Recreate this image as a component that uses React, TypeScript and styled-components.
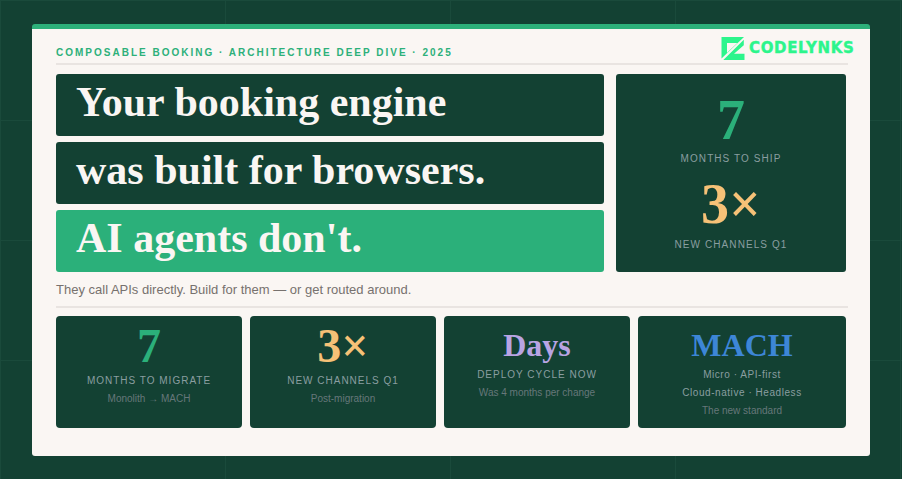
import React from "react";
import styled, { createGlobalStyle } from "styled-components";

const Global = createGlobalStyle`
  html, body { margin: 0; padding: 0; width: 902px; height: 479px; overflow: hidden; }
  body { font-family: "Liberation Sans", Arial, sans-serif; }
`;

const Page = styled.div`
  width: 902px;
  height: 479px;
  box-sizing: border-box;
  padding: 24px 32px 23px;
  background-color: #134133;
  background-image:
    linear-gradient(to right, #1a4a3b 1px, transparent 1px),
    linear-gradient(to bottom, #1a4a3b 1px, transparent 1px);
  background-size: 225px 120px;
  background-position: 0 0;
`;

const Sheet = styled.main`
  position: relative;
  height: 432px;
  box-sizing: border-box;
  background: #faf6f3;
  border-top: 5px solid #2db07a;
  border-radius: 3px;
  padding: 18px 22px 0 24px;
`;

const Eyebrow = styled.div`
  font-size: 10px;
  line-height: 12px;
  font-weight: 700;
  letter-spacing: 2px;
  color: #2db07a;
  white-space: nowrap;
  padding-bottom: 4px;
  border-bottom: 2px solid #e9e4e1;
`;

const Logo = styled.div`
  position: absolute;
  top: 8px;
  left: 689px;
  display: flex;
  align-items: center;
  gap: 4px;
`;

const LogoText = styled.span`
  font-family: "DejaVu Sans", sans-serif;
  font-size: 15px;
  line-height: 23px;
  font-weight: 700;
  letter-spacing: 0.65px;
  color: #2cf58c;
  -webkit-text-stroke: 0.4px #2cf58c;
`;

const Hero = styled.section`
  display: grid;
  grid-template-columns: 548px 230px;
  gap: 12px;
  margin-top: 9px;
`;

const Lines = styled.div`
  display: flex;
  flex-direction: column;
  gap: 6px;
`;

const Line = styled.h1<{ $accent?: boolean }>`
  margin: 0;
  height: 62px;
  box-sizing: border-box;
  padding: 3px 20px 0;
  border-radius: 3px;
  background: ${(p) => (p.$accent ? "#2bb07a" : "#134133")};
  color: #faf6f3;
  font-family: "Liberation Serif", "Times New Roman", serif;
  font-size: 42px;
  line-height: 50px;
  font-weight: 700;
  white-space: nowrap;
`;

const Side = styled.aside`
  border-radius: 3px;
  background: #134133;
  display: flex;
  flex-direction: column;
  align-items: center;
  padding-top: 16px;
`;

const SideValue = styled.div<{ $color: string }>`
  font-family: "Liberation Serif", "Times New Roman", serif;
  font-size: 56px;
  line-height: 60px;
  font-weight: 700;
  color: ${(p) => p.$color};
`;

const SideLabel = styled.div`
  font-size: 10px;
  line-height: 12px;
  letter-spacing: 1.08px;
  color: #8a9ea0;
  margin: 3px 0 9px;

  &:last-child {
    margin-top: 5px;
  }
`;

const Sub = styled.p`
  margin: 10px 0 0;
  font-size: 13px;
  line-height: 16px;
  color: #77716e;
  padding-bottom: 8px;
  border-bottom: 2px solid #e9e4e1;
`;

const Metrics = styled.section`
  display: grid;
  grid-template-columns: 186px 186px 186px 208px;
  gap: 8px;
  margin-top: 8px;
`;

const Metric = styled.article`
  height: 112px;
  border-radius: 4px;
  background: #134133;
  display: flex;
  flex-direction: column;
  align-items: center;
`;

const BigValue = styled.div<{ $color: string; $word?: boolean }>`
  font-family: "Liberation Serif", "Times New Roman", serif;
  font-size: ${(p) => (p.$word ? "32px" : "48px")};
  line-height: ${(p) => (p.$word ? "42px" : "52px")};
  margin-top: ${(p) => (p.$word ? "8px" : "4px")};
  font-weight: 700;
  color: ${(p) => p.$color};
`;

const MetricLabel = styled.div<{ $tight?: boolean }>`
  font-size: 10px;
  line-height: 18px;
  letter-spacing: ${(p) => (p.$tight ? "0.55px" : "1px")};
  color: #8a9ea0;
`;

const MetricNote = styled.div`
  font-size: 10px;
  line-height: 18px;
  color: #66777a;
`;

function LogoMark() {
  return (
    <svg width="24" height="23" viewBox="0 0 24 23">
      <path fill="#2cf58c" fillRule="evenodd" d="M0 0H23L0.500 21.500V0ZM6 6V15.700L16.300 6Z" />
      <path fill="#2cf58c" d="M22.800 2.700V8.300L13 16.700H23.500V23H2.300Z" />
    </svg>
  );
}

export default function App() {
  return (
    <Page>
      <Global />
      <Sheet>
        <Eyebrow>COMPOSABLE BOOKING · ARCHITECTURE DEEP DIVE · 2025</Eyebrow>
        <Logo>
          <LogoMark />
          <LogoText>CODELYNKS</LogoText>
        </Logo>
        <Hero>
          <Lines>
            <Line>Your booking engine</Line>
            <Line>was built for browsers.</Line>
            <Line $accent>AI agents don't.</Line>
          </Lines>
          <Side>
            <SideValue $color="#2bb07a">7</SideValue>
            <SideLabel>MONTHS TO SHIP</SideLabel>
            <SideValue $color="#f6c177">3×</SideValue>
            <SideLabel>NEW CHANNELS Q1</SideLabel>
          </Side>
        </Hero>
        <Sub>They call APIs directly. Build for them — or get routed around.</Sub>
        <Metrics>
          <Metric>
            <BigValue $color="#2bb07a">7</BigValue>
            <MetricLabel>MONTHS TO MIGRATE</MetricLabel>
            <MetricNote>Monolith → MACH</MetricNote>
          </Metric>
          <Metric>
            <BigValue $color="#f6c177">3×</BigValue>
            <MetricLabel>NEW CHANNELS Q1</MetricLabel>
            <MetricNote>Post-migration</MetricNote>
          </Metric>
          <Metric>
            <BigValue $word $color="#b8a4e3">Days</BigValue>
            <MetricLabel>DEPLOY CYCLE NOW</MetricLabel>
            <MetricNote>Was 4 months per change</MetricNote>
          </Metric>
          <Metric>
            <BigValue $word $color="#3d86d6">MACH</BigValue>
            <MetricLabel $tight>Micro · API-first</MetricLabel>
            <MetricLabel $tight>Cloud-native · Headless</MetricLabel>
            <MetricNote>The new standard</MetricNote>
          </Metric>
        </Metrics>
      </Sheet>
    </Page>
  );
}
